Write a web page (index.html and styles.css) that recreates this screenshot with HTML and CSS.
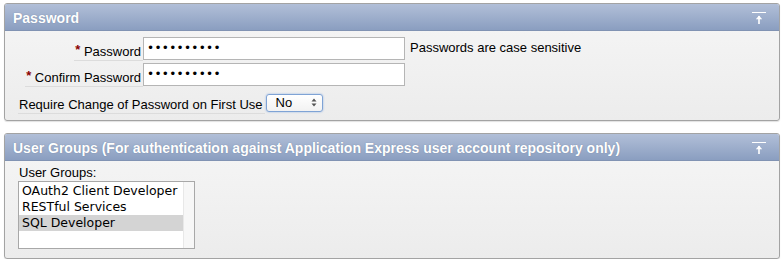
FILE: index.html
```html
<!DOCTYPE html>
<html>
<head>
<meta charset="utf-8">
<link rel="stylesheet" href="styles.css">
</head>
<body>
<div class="panel p1">
  <div class="head">
    <span class="title">Password</span>
    <svg class="collapse" width="14" height="14" viewBox="0 0 14 14"><path d="M0 1.5H14" stroke="#fff" stroke-width="1.2"/><path d="M7 5V13" stroke="#fff" stroke-width="1.6"/><path d="M3.8 8.2L7 4.6L10.2 8.2Z" fill="#fff"/></svg>
  </div>
  <div class="body">
    <div class="row">
      <div class="cell"><label class="lbl"><span class="req">*</span> Password</label></div>
      <div class="inp">••••••••••</div>
      <span class="help">Passwords are case sensitive</span>
    </div>
    <div class="row r2">
      <div class="cell"><label class="lbl"><span class="req">*</span> Confirm Password</label></div>
      <div class="inp">••••••••••</div>
    </div>
    <div class="row r3">
      <label class="lbl">Require Change of Password on First Use</label>
      <div class="sel"><span>No</span><svg width="6" height="9" viewBox="0 0 6 9"><path d="M0.5 3.5L3 0.5L5.5 3.5Z M0.5 5.5L3 8.5L5.5 5.5Z" fill="#555"/></svg></div>
    </div>
  </div>
</div>
<div class="panel p2">
  <div class="head">
    <span class="title">User Groups (For authentication against Application Express user account repository only)</span>
    <svg class="collapse" width="14" height="14" viewBox="0 0 14 14"><path d="M0 1.5H14" stroke="#fff" stroke-width="1.2"/><path d="M7 5V13" stroke="#fff" stroke-width="1.6"/><path d="M3.8 8.2L7 4.6L10.2 8.2Z" fill="#fff"/></svg>
  </div>
  <div class="body b2">
    <div class="glabel">User Groups:</div>
    <div class="list">
      <div class="items">
        <div class="item">OAuth2 Client Developer</div>
        <div class="item">RESTful Services</div>
        <div class="item selected">SQL Developer</div>
      </div>
      <div class="scroll"></div>
    </div>
  </div>
</div>
</body>
</html>
```

FILE: styles.css
```css
html, body { margin: 0; padding: 0; background: #fff; }
body { font-family: "Liberation Sans", Arial, sans-serif; font-size: 13px; color: #000; }

.panel {
  width: 774px;
  margin-left: 4px;
  border: 1px solid #a3a3a3;
  border-radius: 3px;
  box-shadow: 0 1px 1px rgba(0,0,0,0.12);
  overflow: hidden;
  background: linear-gradient(#f6f6f6, #ececec);
}
.p1 { margin-top: 3px; }
.p2 { margin-top: 12px; }

.head {
  height: 26px;
  display: flex;
  align-items: center;
  justify-content: space-between;
  padding: 0 13px 0 8px;
  background: linear-gradient(#b1bfd8, #8a9ec0);
  border-bottom: 1px solid #8193b3;
}
.title {
  color: #fff;
  font-weight: bold;
  font-size: 14px;
  text-shadow: 0 0 1px rgba(60,80,110,0.5);
  padding-top: 1px;
}
.collapse { margin-top: 1px; }

.body { padding: 6px 14px 9px 13px; }
.row { display: flex; align-items: center; height: 23px; }
.r2 { margin-top: 3px; }
.r3 { margin-top: 8px; height: 17px; }

.cell { width: 125px; text-align: right; }
.lbl {
  display: inline-block;
  border-bottom: 1px solid #dcdcdc;
  line-height: 15px;
  padding: 3px 2px 1px 1px;
  margin-top: 2px;
  white-space: nowrap;
}
.req { color: #8b0000; font-weight: bold; font-size: 13px; vertical-align: 2px; }

.inp {
  box-sizing: border-box;
  width: 262px;
  height: 23px;
  border: 1px solid #b5b5b5;
  background: #fff;
  font-family: "DejaVu Sans", sans-serif;
  font-size: 12px;
  letter-spacing: 0.3px;
  line-height: 21px;
  padding-left: 3px;
}
.help { margin-left: 5px; margin-top: -3px; }

.sel {
  box-sizing: border-box;
  width: 57px;
  height: 18px;
  margin-left: 1px;
  border: 1px solid #7fa3d5;
  border-radius: 3px;
  box-shadow: 0 0 2px #8fb2e4;
  background: linear-gradient(#ffffff, #f2f2f2);
  display: flex;
  align-items: center;
  justify-content: space-between;
  padding: 0 5px 0 9px;
  font-size: 13px;
}

.b2 { padding: 5px 14px 9px 13px; }
.glabel { line-height: 14px; margin-left: 1px; }
.list {
  margin-top: 1px;
  box-sizing: border-box;
  width: 177px;
  height: 68px;
  border: 1px solid #a8a8a8;
  background: #fff;
  display: flex;
}
.items { flex: 1; padding-top: 1px; }
.item {
  font-family: "DejaVu Sans", sans-serif;
  font-size: 12.5px;
  height: 16px;
  line-height: 16px;
  padding-left: 3px;
  white-space: nowrap;
}
.selected { background: #d4d4d4; }
.scroll { width: 10px; background: #f7f7f7; border-left: 1px solid #e8e8e8; }
```
